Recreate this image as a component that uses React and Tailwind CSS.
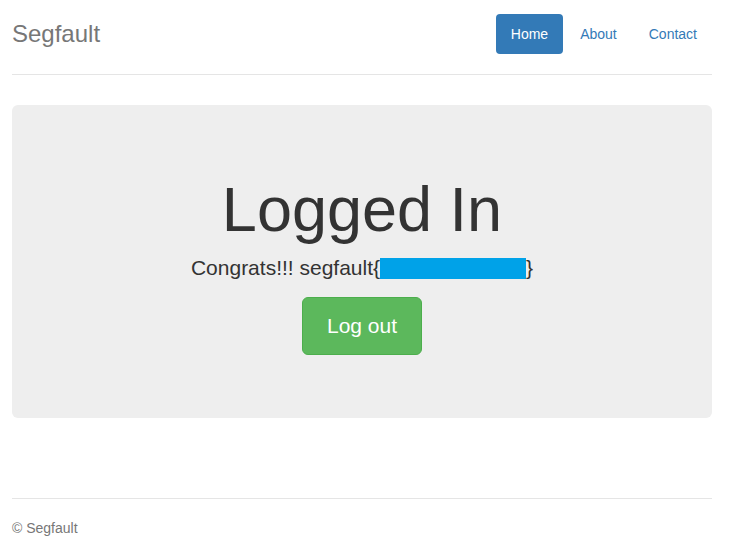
export default function App() {
  const navItems = ['Home', 'About', 'Contact'];

  return (
    <div className="min-h-screen bg-white text-[#333] font-['Liberation_Sans',Arial,sans-serif] text-[14px] leading-[20px]">
      <div className="w-[724px] px-3">
        {/* header */}
        <div className="flex items-center justify-between pt-[14px] pb-5 border-b border-[#e5e5e5]">
          <h3 className="text-[24px] leading-[40px] text-[#777]">Segfault</h3>
          <nav className="flex gap-[2px]">
            {navItems.map((item, i) => (
              <a
                key={item}
                href="#"
                className={`block px-[15px] py-[10px] rounded-[4px] leading-[20px] ${
                  i === 0 ? 'bg-[#337ab7] text-white' : 'text-[#337ab7]'
                }`}
              >
                {item}
              </a>
            ))}
          </nav>
        </div>

        {/* jumbotron */}
        <div className="mt-[30px] bg-[#eeeeee] rounded-[6px] text-center pt-[48px] pb-[63px]">
          <h1 className="mt-[21px] mb-[9px] text-[63px] leading-[70px] text-[#333]">Logged In</h1>
          <p className="text-[21px] leading-[29px] mb-[15px]">
            Congrats!!! segfault{'{'}
            <span className="inline-block align-[-4px] w-[146px] h-[21px] bg-[#00a2e8]" />
            {'}'}
          </p>
          <button className="w-[120px] h-[58px] rounded-[6px] bg-[#5cb85c] border border-[#4cae4c] text-white text-[21px]">
            Log out
          </button>
        </div>

        {/* footer */}
        <footer className="mt-[80px] pt-[19px] border-t border-[#e5e5e5] text-[#777]">
          <p>© Segfault</p>
        </footer>
      </div>
    </div>
  );
}
